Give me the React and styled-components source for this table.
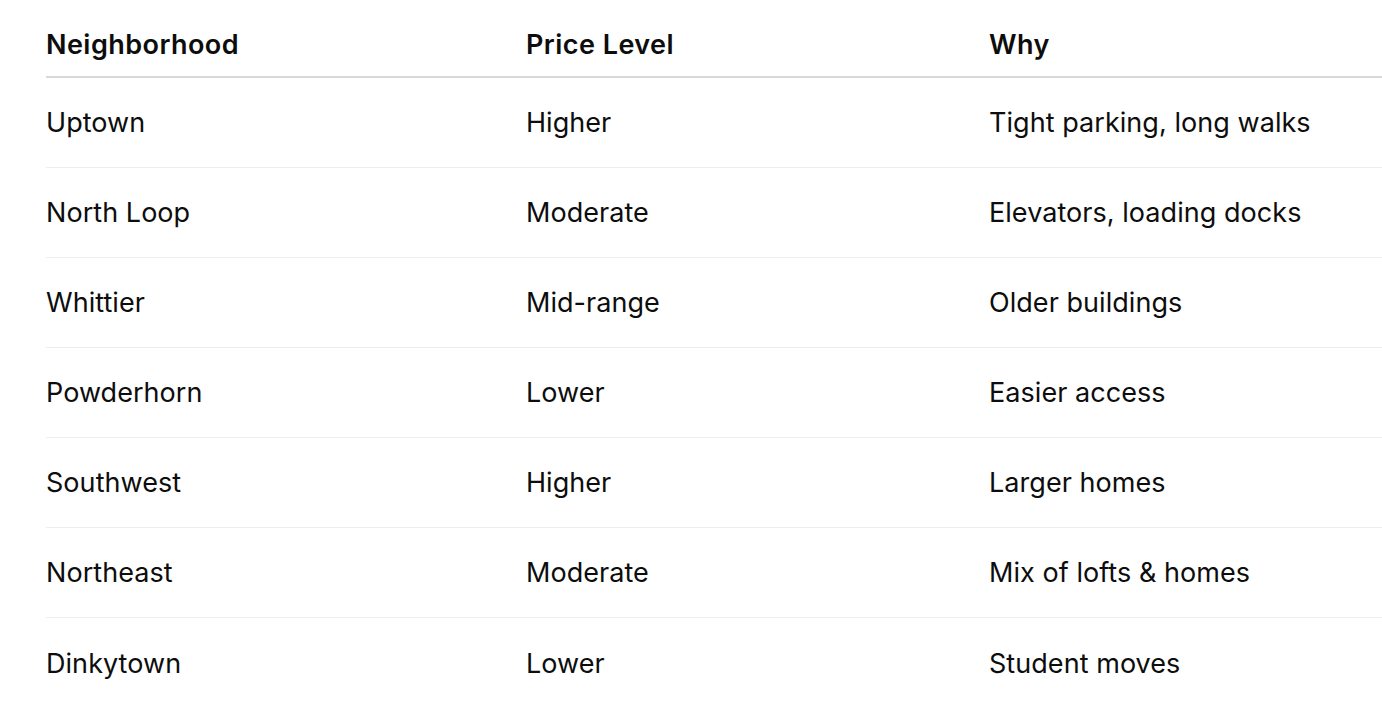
import styled, { createGlobalStyle } from "styled-components";

const GlobalStyle = createGlobalStyle`
  html, body {
    margin: 0;
    padding: 0;
    background: #ffffff;
  }
  body {
    font-family: Inter, "Noto Sans", "Liberation Sans", sans-serif;
    color: #0d0d0d;
    overflow: hidden;
  }
`;

const rows = [
  ["Uptown", "Higher", "Tight parking, long walks"],
  ["North Loop", "Moderate", "Elevators, loading docks"],
  ["Whittier", "Mid-range", "Older buildings"],
  ["Powderhorn", "Lower", "Easier access"],
  ["Southwest", "Higher", "Larger homes"],
  ["Northeast", "Moderate", "Mix of lofts & homes"],
  ["Dinkytown", "Lower", "Student moves"],
];

const Page = styled.div`
  padding-left: 46px;
  width: calc(100vw - 46px);
`;

const Row = styled.div`
  display: grid;
  grid-template-columns: 480px 463px 1fr;
  align-items: center;
  box-sizing: border-box;
  height: ${(p) => (p.$head ? "78px" : "90px")};
  padding-top: ${(p) => (p.$head ? "12px" : "0")};
  border-bottom: ${(p) =>
    p.$head ? "2px solid #d9d9d9" : p.$last ? "none" : "1px solid #ededed"};
`;

const Cell = styled.div`
  font-size: 27px;
  font-weight: ${(p) => (p.$head ? 600 : 400)};
  letter-spacing: ${(p) => (p.$head ? "0.45px" : "0.05px")};
  white-space: nowrap;
`;

export default function App() {
  return (
    <>
      <GlobalStyle />
      <Page>
        <Row $head>
          <Cell $head>Neighborhood</Cell>
          <Cell $head>Price Level</Cell>
          <Cell $head>Why</Cell>
        </Row>
        {rows.map((r, i) => (
          <Row key={r[0]} $last={i === rows.length - 1}>
            {r.map((c) => (
              <Cell key={c}>{c}</Cell>
            ))}
          </Row>
        ))}
      </Page>
    </>
  );
}
